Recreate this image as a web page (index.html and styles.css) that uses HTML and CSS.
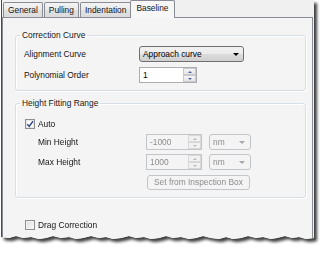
FILE: index.html
```html
<!DOCTYPE html>
<html>
<head>
<meta charset="utf-8">
<link rel="stylesheet" href="styles.css">
</head>
<body>
<div class="shot">
  <div class="sheet">
    <div class="tabs">
      <div class="tab">General</div>
      <div class="tab">Pulling</div>
      <div class="tab">Indentation</div>
      <div class="tab active">Baseline</div>
    </div>
    <div class="pane">
      <fieldset class="group g1">
        <legend>Correction Curve</legend>
        <div class="form1">
          <span class="lbl">Alignment Curve</span>
          <div class="combo"><span>Approach curve</span><i class="caret"></i></div>
          <span class="lbl">Polynomial Order</span>
          <div class="spin"><span class="val">1</span><span class="arrows"><i class="up"></i><i class="down"></i></span></div>
        </div>
      </fieldset>
      <fieldset class="group g2">
        <legend>Height Fitting Range</legend>
        <div class="check"><span class="box on"><svg width="8" height="8" viewBox="0 0 8 8"><path d="M1.2 4.2 L3.2 6.3 L7 1.3" fill="none" stroke="#3a4d8a" stroke-width="1.5"/></svg></span>Auto</div>
        <div class="form2">
          <span class="lbl">Min Height</span>
          <div class="spin dis"><span class="val">-1000</span><span class="arrows"><i class="up"></i><i class="down"></i></span></div>
          <div class="combo small dis"><span>nm</span><i class="caret"></i></div>
          <span class="lbl">Max Height</span>
          <div class="spin dis"><span class="val">1000</span><span class="arrows"><i class="up"></i><i class="down"></i></span></div>
          <div class="combo small dis"><span>nm</span><i class="caret"></i></div>
          <div class="btn">Set from Inspection Box</div>
        </div>
      </fieldset>
      <div class="check drag"><span class="box"></span>Drag Correction</div>
    </div>
  </div>
</div>
</body>
</html>
```

FILE: styles.css
```css
* { box-sizing: border-box; }
body {
  margin: 0;
  background: #fff;
  font-family: "Liberation Sans", Arial, sans-serif;
  font-size: 8.4px;
  color: #151515;
}
.shot {
  width: 322px;
  height: 253px;
  filter: drop-shadow(3px 3px 1.5px rgba(0,0,0,0.75));
}
.sheet {
  margin-left: 1px;
  width: 313px;
  height: 246px;
  background: #f0f0f0;
  border-left: 1px solid #4a4a4a;
  clip-path: polygon(0 0, 313px 0, 313px 238px, 305px 239px, 298px 237px, 291px 238px, 284px 236px, 276px 238px, 270px 239px, 262px 237px, 255px 238px, 247px 236px, 240px 238px, 232px 239px, 225px 237px, 218px 239px, 210px 238px, 202px 236px, 195px 238px, 188px 239px, 180px 237px, 172px 238px, 165px 236px, 158px 238px, 150px 239px, 143px 237px, 135px 238px, 128px 236px, 120px 238px, 112px 239px, 105px 237px, 98px 238px, 90px 236px, 82px 238px, 75px 239px, 68px 237px, 60px 238px, 52px 236px, 45px 238px, 38px 239px, 30px 237px, 22px 238px, 15px 236px, 8px 238px, 0 237px);
}
.tabs {
  height: 17px;
  display: flex;
  align-items: flex-end;
  padding-left: 1px;
}
.tab {
  height: 15px;
  line-height: 14px;
  padding: 0 4px;
  border: 1px solid #898c95;
  border-bottom: none;
  border-radius: 2px 2px 0 0;
  background: linear-gradient(#f4f4f4, #e9e9e9 50%, #e0e0e0 50%, #dcdcdc);
  margin-right: 1px;
}
.tab.active {
  height: 18px;
  line-height: 14px;
  margin: 0 0 -1px -2px;
  padding: 0 5px;
  background: #f7f7f7;
  position: relative;
  z-index: 1;
}
.pane {
  width: 311px;
  height: 240px;
  border: 1px solid #898c95;
  background: #f4f4f4;
  padding: 12px 6px 0 12px;
}
.group {
  margin: 0;
  border: 1px solid #d5dfe5;
  border-radius: 3px;
  box-shadow: inset 1px 1px 0 #fff, 1px 1px 0 #fff;
  padding: 6px 8px 7px 8px;
  min-width: 0;
}
.group legend {
  line-height: 10px;
  padding: 0 2px;
  margin-left: -4px;
}
.g2 {
  margin-top: 7px;
  padding-top: 10px;
  padding-bottom: 8px;
}
.form1 {
  display: grid;
  grid-template-columns: 115px 105px;
  grid-auto-rows: 16px;
  row-gap: 5px;
  align-items: center;
}
.combo {
  height: 16px;
  border: 1px solid #707070;
  border-radius: 3px;
  background: linear-gradient(#f2f2f2, #ebebeb 50%, #dddddd 50%, #cfcfcf);
  display: flex;
  align-items: center;
  justify-content: space-between;
  padding: 0 4px 0 3px;
  color: #000;
}
.caret {
  width: 0;
  height: 0;
  border-left: 3px solid transparent;
  border-right: 3px solid transparent;
  border-top: 3px solid #000;
}
.spin {
  height: 16px;
  width: 58px;
  border: 1px solid #abadb3;
  background: #fff;
  display: flex;
  justify-content: space-between;
  color: #000;
}
.spin .val {
  padding: 2px 0 0 3px;
}
.arrows {
  width: 13px;
  display: flex;
  flex-direction: column;
}
.arrows i {
  flex: 1;
  border: 1px solid #c7c9cc;
  background: linear-gradient(#f6f6f6, #e4e4e4);
  display: flex;
  align-items: center;
  justify-content: center;
}
.arrows i::before {
  content: "";
  border-left: 2px solid transparent;
  border-right: 2px solid transparent;
}
.arrows .up::before { border-bottom: 2px solid #50629a; }
.arrows .down::before { border-top: 2px solid #50629a; }
.check {
  display: flex;
  align-items: center;
  gap: 3px;
  height: 12px;
  margin-left: 1px;
}
.box {
  width: 10px;
  height: 10px;
  border: 1px solid #8f8f8f;
  background: linear-gradient(135deg, #dcdcdc, #fbfbfb);
  box-shadow: inset 0 0 0 1px #f4f4f4;
  display: flex;
  align-items: center;
  justify-content: center;
}
.box.on {
  background: #fff;
  box-shadow: inset 0 0 0 1px #e6e6e6;
}
.form2 {
  margin-top: 4px;
  padding-left: 14px;
  display: grid;
  grid-template-columns: 101px 56px 42px;
  grid-template-rows: 16px 16px 15px;
  column-gap: 7px;
  row-gap: 4px;
  align-items: center;
}
.form2 .btn {
  grid-column: 2 / 4;
  margin-top: 2px;
  margin-left: 1px;
  width: 103px;
}
.spin.dis {
  width: 56px;
  background: #f4f4f4;
  border-color: #c2c5c9;
  color: #8c8c8c;
}
.spin.dis .arrows i {
  border-color: #d8d8d8;
  background: #f1f1f1;
}
.spin.dis .arrows .up::before { border-bottom-color: #b9b9b9; }
.spin.dis .arrows .down::before { border-top-color: #b9b9b9; }
.combo.dis {
  border-color: #c2c5c9;
  background: #f4f4f4;
  color: #8c8c8c;
  padding: 0 5px 0 3px;
}
.combo.dis .caret { border-top-color: #a8a8a8; }
.btn {
  height: 15px;
  border: 1px solid #c2c5c9;
  border-radius: 3px;
  background: #f4f4f4;
  color: #8c8c8c;
  text-align: center;
  line-height: 13px;
}
.drag {
  margin-top: 21px;
  margin-left: 10px;
}
```
